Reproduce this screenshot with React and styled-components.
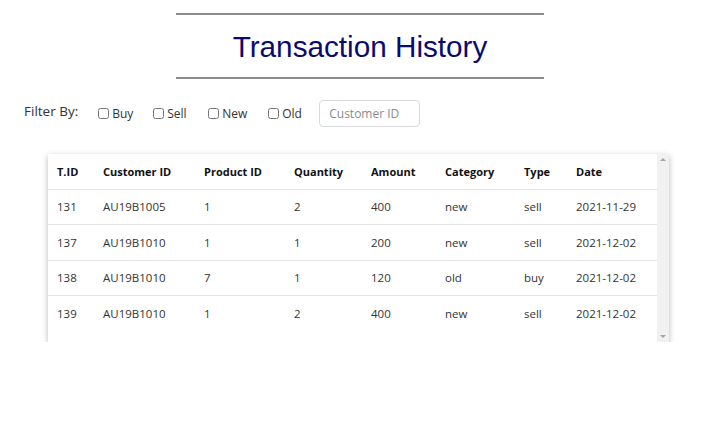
import React, { useState } from 'react';
import styled, { createGlobalStyle } from 'styled-components';

const GlobalStyle = createGlobalStyle`
  body {
    margin: 0;
    background: #fff;
    font-family: "Open Sans", "Noto Sans", sans-serif;
    color: #212529;
  }
`;

const Page = styled.div`
  width: 720px;
  padding-top: 13px;
`;

const Header = styled.div`
  width: 368px;
  margin: 0 auto;
`;

const Rule = styled.div`
  height: 2px;
  background: #8c8c8c;
`;

const Title = styled.h1`
  margin: 0;
  height: 62px;
  line-height: 64px;
  text-align: center;
  font-family: "Liberation Sans", Arial, sans-serif;
  font-weight: 400;
  font-size: 29.7px;
  color: #0b0b6e;
`;

const FilterBar = styled.div`
  display: flex;
  align-items: center;
  margin-top: 20px;
  padding-left: 24px;
  height: 28px;
`;

const FilterLabel = styled.span`
  font-size: 13.5px;
  color: #333;
  margin-right: 20px;
  margin-top: -4px;
`;

const Check = styled.label`
  display: flex;
  align-items: center;
  width: ${(p) => p.w}px;
  font-size: 12px;
  color: #333;

  input {
    width: 11px;
    height: 11px;
    margin: 0 3px 0 0;
  }
`;

const SearchInput = styled.input`
  width: 101px;
  height: 27px;
  box-sizing: border-box;
  border: 1px solid #d9d9d9;
  border-radius: 4px;
  padding: 0 9px;
  font-family: inherit;
  font-size: 12px;
  color: #333;
  outline: none;

  &::placeholder {
    color: #8a8a8a;
  }
`;

const TableBox = styled.div`
  display: flex;
  width: 621px;
  height: 188px;
  margin: 27px 0 0 48px;
  box-shadow: 0 2px 6px rgba(0, 0, 0, 0.28);
  background: #fff;
`;

const TableArea = styled.div`
  flex: 1;
  overflow: hidden;
`;

const ScrollTrack = styled.div`
  width: 12px;
  background: #f1f1f1;
  display: flex;
  flex-direction: column;
  justify-content: space-between;
  align-items: center;
  padding: 4px 0;
  box-sizing: border-box;
`;

const Arrow = styled.span`
  width: 0;
  height: 0;
  border-left: 3px solid transparent;
  border-right: 3px solid transparent;
  ${(p) => (p.down ? 'border-top: 3px solid #a3a3a3;' : 'border-bottom: 3px solid #a3a3a3;')}
`;

const Table = styled.table`
  width: 609px;
  border-collapse: collapse;
  table-layout: fixed;
`;

const Th = styled.th`
  box-sizing: border-box;
  text-align: left;
  font-weight: 700;
  font-size: 11px;
  height: 35px;
  padding: 0 0 0 9px;
  border-bottom: 1px solid #e4e4e4;
  color: #111;
  width: ${(p) => p.w}px;
`;

const Td = styled.td`
  height: 34.5px;
  padding: 0 0 0 9px;
  font-size: 11.5px;
  border-bottom: ${(p) => (p.last ? 'none' : '1px solid #e4e4e4')};
  color: #333;
`;

const columns = [
  ['T.ID', 46],
  ['Customer ID', 101],
  ['Product ID', 90],
  ['Quantity', 77],
  ['Amount', 74],
  ['Category', 79],
  ['Type', 52],
  ['Date', 90],
];

const rows = [
  ['131', 'AU19B1005', '1', '2', '400', 'new', 'sell', '2021-11-29'],
  ['137', 'AU19B1010', '1', '1', '200', 'new', 'sell', '2021-12-02'],
  ['138', 'AU19B1010', '7', '1', '120', 'old', 'buy', '2021-12-02'],
  ['139', 'AU19B1010', '1', '2', '400', 'new', 'sell', '2021-12-02'],
];

const filters = [
  ['Buy', 55],
  ['Sell', 55],
  ['New', 60],
  ['Old', 51],
];

export default function App() {
  const [customer, setCustomer] = useState('');

  return (
    <Page>
      <GlobalStyle />
      <Header>
        <Rule />
        <Title>Transaction History</Title>
        <Rule />
      </Header>

      <FilterBar>
        <FilterLabel>Filter By:</FilterLabel>
        {filters.map(([name, w]) => (
          <Check key={name} w={w}>
            <input type="checkbox" />
            {name}
          </Check>
        ))}
        <SearchInput
          placeholder="Customer ID"
          value={customer}
          onChange={(e) => setCustomer(e.target.value)}
        />
      </FilterBar>

      <TableBox>
        <TableArea>
          <Table>
            <thead>
              <tr>
                {columns.map(([name, w]) => (
                  <Th key={name} w={w}>{name}</Th>
                ))}
              </tr>
            </thead>
            <tbody>
              {rows.map((r, i) => (
                <tr key={r[0]}>
                  {r.map((c, j) => (
                    <Td key={j} last={i === rows.length - 1}>{c}</Td>
                  ))}
                </tr>
              ))}
            </tbody>
          </Table>
        </TableArea>
        <ScrollTrack>
          <Arrow />
          <Arrow down />
        </ScrollTrack>
      </TableBox>
    </Page>
  );
}
